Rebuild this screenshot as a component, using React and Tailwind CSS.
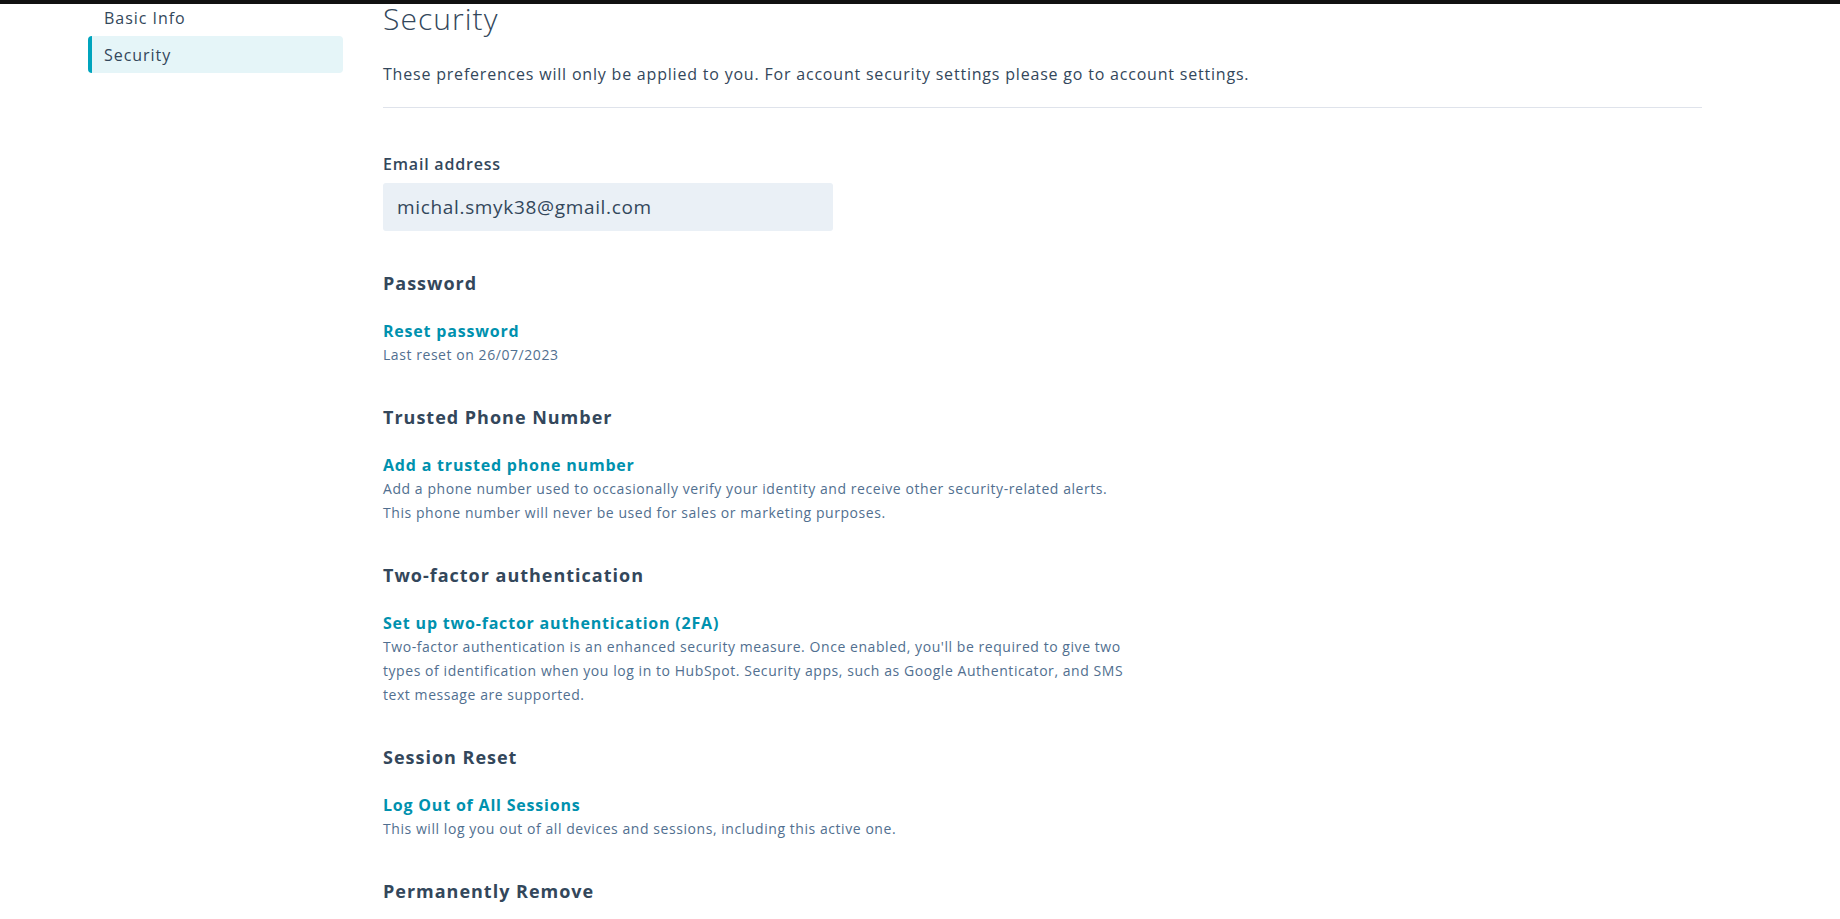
import React from 'react';

const sections = [
  {
    title: 'Password',
    link: 'Reset password',
    lines: ['Last reset on 26/07/2023'],
  },
  {
    title: 'Trusted Phone Number',
    link: 'Add a trusted phone number',
    lines: [
      'Add a phone number used to occasionally verify your identity and receive other security-related alerts.',
      'This phone number will never be used for sales or marketing purposes.',
    ],
  },
  {
    title: 'Two-factor authentication',
    link: 'Set up two-factor authentication (2FA)',
    lines: [
      "Two-factor authentication is an enhanced security measure. Once enabled, you'll be required to give two",
      'types of identification when you log in to HubSpot. Security apps, such as Google Authenticator, and SMS',
      'text message are supported.',
    ],
  },
  {
    title: 'Session Reset',
    link: 'Log Out of All Sessions',
    lines: ['This will log you out of all devices and sessions, including this active one.'],
  },
];

function Section({ title, link, lines, first }) {
  return (
    <section className={first ? 'mt-[40px]' : 'mt-[38px]'}>
      <h2 className="text-[18px] leading-[24px] font-bold tracking-[0.055em] text-[#33475b]">{title}</h2>
      <a href="#" className="mt-6 block text-[16px] leading-[24px] font-bold tracking-[0.05em] text-[#0091ae]">
        {link}
      </a>
      {lines.map(l => (
        <p key={l} className="text-[14px] leading-[24px] tracking-[0.04em] text-[#516f90] whitespace-nowrap">
          {l}
        </p>
      ))}
    </section>
  );
}

export default function App() {
  return (
    <div className="relative min-h-[919px] bg-white font-['Open_Sans',sans-serif] text-[#33475b]">
      {/* top bar leftover from the header above */}
      <div className="absolute left-0 right-0 top-0 h-[4px] bg-[#111]" />

      <div className="flex pl-[88px]">
        <nav className="w-[255px] shrink-0">
          <a href="#" className="flex h-[36px] items-center pl-[16px] text-[16px] tracking-[0.06em] text-[#33475b]">
            Basic Info
          </a>
          <a
            href="#"
            className="flex h-[37px] items-center rounded-[4px] border-l-4 border-[#00a4bd] bg-[#e5f5f8] pl-[12px] text-[16px] tracking-[0.06em] text-[#33475b]"
          >
            Security
          </a>
        </nav>

        <main className="ml-[40px] w-[1319px]">
          <h1 className="text-[30px] leading-[38px] font-light tracking-[0.035em] text-[#33475b]">Security</h1>
          <p className="mt-[24px] text-[16px] leading-[24px] tracking-[0.05em] text-[#33475b]">
            These preferences will only be applied to you. For account security settings please go to account settings.
          </p>
          <div className="mt-[21px] h-px bg-[#dfe3eb]" />

          <label className="mt-[44px] block text-[16px] leading-[24px] font-semibold tracking-[0.05em] text-[#33475b]">
            Email address
          </label>
          <div className="mt-[7px] flex h-[48px] w-[450px] items-center rounded-[3px] bg-[#eaf0f6] px-[14px] text-[19px] tracking-[0.035em] text-[#33475b]">
            michal.smyk38@gmail.com
          </div>

          {sections.map((s, i) => (
            <Section key={s.title} {...s} first={i === 0} />
          ))}

          <section className="mt-[38px]">
            <h2 className="text-[18px] leading-[24px] font-bold tracking-[0.055em] text-[#33475b]">Permanently Remove</h2>
          </section>
        </main>
      </div>
    </div>
  );
}
